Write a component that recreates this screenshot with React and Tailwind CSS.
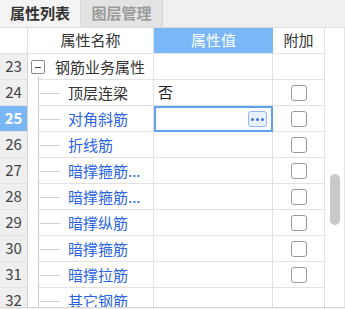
import React from 'react';

const rows = [
  { n: 24, name: '顶层连梁', value: '否', blue: false, check: true },
  { n: 25, name: '对角斜筋', value: '', blue: true, check: true, selected: true },
  { n: 26, name: '折线筋', value: '', blue: true, check: true },
  { n: 27, name: '暗撑箍筋...', value: '', blue: true, check: true },
  { n: 28, name: '暗撑箍筋...', value: '', blue: true, check: true },
  { n: 29, name: '暗撑纵筋', value: '', blue: true, check: true },
  { n: 30, name: '暗撑箍筋', value: '', blue: true, check: true },
  { n: 31, name: '暗撑拉筋', value: '', blue: true, check: true },
  { n: 32, name: '其它钢筋', value: '', blue: true, check: false },
];

const font = { fontFamily: '"Noto Sans CJK SC", "Noto Sans", sans-serif' };

const Checkbox = () => (
  <div className="w-4 h-4 rounded-[3px] border-[1.5px] border-[#9a9a9a] bg-white" />
);

const RowNum = ({ n, active }) => (
  <div
    className={`w-[28px] shrink-0 flex items-center justify-center border-r border-b border-r-[#d4d4d4] border-b-[#e2e2e2] ${
      active ? 'bg-[#7ab7f6] text-white font-bold' : 'bg-[#efefef] text-[#444]'
    }`}
  >
    {n}
  </div>
);

const App = () => {
  return (
    <div className="w-[345px] h-[309px] bg-[#f0f0f0] flex flex-col text-[15px] overflow-hidden" style={font}>
      {/* tabs */}
      <div className="h-[28px] flex items-end border-b border-[#dcdcdc]">
        <div className="w-[81px] h-[27px] flex items-center justify-center bg-[#f4f4f4] font-bold text-[#333] border-r border-[#d8d8d8]">
          属性列表
        </div>
        <div className="w-[82px] h-[27px] flex items-center justify-center bg-[#e3e3e3] font-bold text-[#9b9b9b] border-r border-[#d4d4d4]">
          图层管理
        </div>
      </div>

      {/* grid */}
      <div className="h-[280px] flex bg-white border-b border-[#d6d6d6]">
        <div className="w-[325px] flex flex-col overflow-hidden">
          {/* header */}
          <div className="h-[26px] shrink-0 flex">
            <div className="w-[28px] border-r border-b border-[#e2e2e2]" />
            <div className="w-[126px] flex items-center justify-center text-[#333] border-r border-b border-[#e2e2e2]">
              属性名称
            </div>
            <div className="w-[119px] flex items-center justify-center bg-[#7ab7f6] text-white border-b border-[#e2e2e2]">
              属性值
            </div>
            <div className="w-[52px] flex items-center justify-center text-[#333] border-r border-b border-[#e2e2e2]">
              附加
            </div>
          </div>

          {/* group row */}
          <div className="h-[26px] shrink-0 flex">
            <RowNum n={23} />
            <div className="w-[126px] relative flex items-center border-r border-[#e2e2e2]">
              <div className="absolute left-[11px] right-0 bottom-0 h-px bg-[#e2e2e2]" />
              <div className="absolute left-[10px] top-[22px] bottom-0 w-px bg-[#d0d0d0]" />
              <div className="ml-[3px] w-[14px] h-[14px] border border-[#8a8a8a] rounded-[2px] bg-white flex items-center justify-center">
                <div className="w-[6px] h-px bg-[#444]" />
              </div>
              <span className="ml-[10px] text-[#333]">钢筋业务属性</span>
            </div>
            <div className="w-[119px] border-r border-b border-[#e2e2e2]" />
            <div className="w-[52px] border-r border-b border-[#e2e2e2]" />
          </div>

          {rows.map((r) => (
            <div key={r.n} className="h-[26px] shrink-0 flex">
              <RowNum n={r.n} active={r.selected} />
              <div className="w-[126px] relative flex items-center border-r border-[#e2e2e2]">
                <div className="absolute left-[11px] right-0 bottom-0 h-px bg-[#e2e2e2]" />
                <div className="absolute left-[10px] top-0 bottom-0 w-px bg-[#d0d0d0]" />
                <div className="ml-[12px] w-[20px] h-px bg-[#cfcfcf]" />
                <span className={`ml-[8px] whitespace-nowrap ${r.blue ? 'text-[#2b64e3]' : 'text-[#333]'}`}>{r.name}</span>
              </div>
              {r.selected ? (
                <div className="w-[119px] border-2 border-[#5ea2ee] flex items-center justify-end pr-[4px]">
                  <div className="w-[19px] h-[16px] rounded-[3px] border border-[#8fb8f0] bg-[#e9f1fd] flex items-center justify-center gap-[2px]">
                    <div className="w-[3px] h-[3px] rounded-full bg-[#3a74e0]" />
                    <div className="w-[3px] h-[3px] rounded-full bg-[#3a74e0]" />
                    <div className="w-[3px] h-[3px] rounded-full bg-[#3a74e0]" />
                  </div>
                </div>
              ) : (
                <div className="w-[119px] flex items-center pl-[4px] text-[#222] border-r border-b border-[#e2e2e2]">
                  {r.value}
                </div>
              )}
              <div className="w-[52px] flex items-center justify-center border-r border-b border-[#e2e2e2]">
                {r.check && <Checkbox />}
              </div>
            </div>
          ))}
        </div>

        {/* scrollbar */}
        <div className="w-[20px] border-r border-[#e6e6e6] flex justify-center">
          <div className="mt-[146px] w-[10px] h-[51px] rounded-full bg-[#c9c9c9]" />
        </div>
      </div>
    </div>
  );
};

export default App;
